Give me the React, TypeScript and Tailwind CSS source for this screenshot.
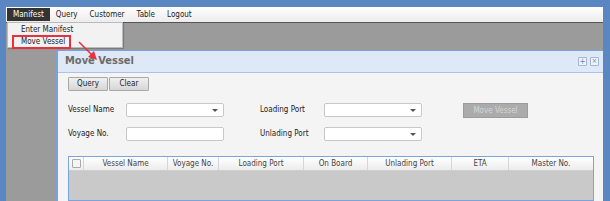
const font = "font-['DejaVu_Sans_Condensed','DejaVu_Sans',sans-serif] [font-stretch:condensed]";

const menuItems = ["Manifest", "Query", "Customer", "Table", "Logout"];

const columns = [
  "Vessel Name",
  "Voyage No.",
  "Loading Port",
  "On Board",
  "Unlading Port",
  "ETA",
  "Master No.",
];

function Select({ width }: { width: string }) {
  return (
    <div
      className={`${width} relative h-[14px] rounded-[2px] border border-[#c8c8c8] bg-white`}
    >
      <span className="absolute right-[5px] top-[5px] h-0 w-0 border-x-[3px] border-t-[3px] border-x-transparent border-t-[#555]" />
    </div>
  );
}

function Button({ label }: { label: string }) {
  return (
    <button className="h-[14px] w-[40px] rounded-[1px] border border-[#a8a8a8] bg-gradient-to-b from-[#f0f0f0] to-[#d6d6d6] text-[8px] leading-[12px] text-[#222]">
      {label}
    </button>
  );
}

export default function App() {
  return (
    <div
      className={`${font} relative h-[201px] w-[610px] overflow-hidden bg-[#5a86c2] pl-[6px] pr-[7px] pt-[7px] text-[8px] text-[#222]`}
    >
      <div className="flex h-full flex-col">
        {/* menu bar */}
        <div className="flex h-[16px] items-center border-b border-[#555] bg-gradient-to-b from-[#ffffff] to-[#ececec] pl-[1px]">
          {menuItems.map((item, i) => (
            <div
              key={item}
              className={
                i === 0
                  ? "flex h-[13px] items-center bg-[#333] px-[6px] text-white"
                  : "flex h-[13px] items-center px-[6px] text-[#222]"
              }
            >
              {item}
            </div>
          ))}
        </div>

        {/* desktop */}
        <div className="flex flex-1 flex-col bg-[#9b9b9b] pl-[50px] pt-[27px]">
          <div className="flex flex-1 flex-col border-l-2 border-t border-[#7aa2da] bg-[#f4f4f4]">
            <div className="flex h-[22px] items-center justify-between border-b border-[#a9c3ea] bg-[#dfe8f6] pl-[7px] pr-[4px]">
              <span className="text-[11px] font-bold text-[#6b6b6b]">Move Vessel</span>
              <div className="flex gap-[3px]">
                <span className="flex h-[9px] w-[9px] items-center justify-center rounded-[1px] border border-[#a3b6d3] bg-[#eef3fa] text-[8px] leading-none text-[#6f87ab]">
                  +
                </span>
                <span className="flex h-[9px] w-[9px] items-center justify-center rounded-[1px] border border-[#a3b6d3] bg-[#eef3fa] text-[7px] leading-none text-[#6f87ab]">
                  ×
                </span>
              </div>
            </div>

            <div className="flex flex-1 flex-col pl-[10px] pr-[9px] pt-[4px]">
              <div className="flex gap-[1px]">
                <Button label="Query" />
                <Button label="Clear" />
              </div>

              <div className="mt-[10px] flex items-center">
                <span className="w-[58px]">Vessel Name</span>
                <Select width="w-[98px]" />
                <span className="ml-[36px] w-[64px]">Loading Port</span>
                <Select width="w-[98px]" />
                <button className="ml-[41px] mt-[2px] h-[15px] w-[65px] border border-[#9c9c9c] bg-[#ababab] text-[8px] text-[#d6d6d6]">
                  Move Vessel
                </button>
              </div>

              <div className="mt-[9px] flex items-center">
                <span className="w-[58px]">Voyage No.</span>
                <div className="h-[14px] w-[98px] rounded-[2px] border border-[#c8c8c8] bg-white" />
                <span className="ml-[36px] w-[64px]">Unlading Port</span>
                <Select width="w-[98px]" />
              </div>

              <div className="mt-[15px] flex flex-1 flex-col border border-[#7aa4dc] bg-[#c9c9c9]">
                <div className="grid h-[14px] grid-cols-[15px_84px_51px_85px_64px_84px_57px_1fr] border-b border-[#cfcfcf] bg-gradient-to-b from-[#ffffff] to-[#ececec] text-[#444]">
                  <div className="flex items-center justify-center border-r border-[#d6d6d6]">
                    <span className="h-[9px] w-[9px] rounded-[1px] border border-[#aaa] bg-[#f4f4f4]" />
                  </div>
                  {columns.map((c, i) => (
                    <div
                      key={c}
                      className={
                        i < columns.length - 1
                          ? "flex items-center justify-center border-r border-[#d6d6d6]"
                          : "flex items-center justify-center"
                      }
                    >
                      {c}
                    </div>
                  ))}
                </div>
              </div>
            </div>
          </div>
        </div>
      </div>

      {/* open dropdown */}
      <div className="absolute left-[7px] top-[22px] flex h-[26px] w-[116px] flex-col border border-[#bbb] bg-[#f2f2f2] pl-[13px] pt-[1px] shadow-[1px_1px_1px_rgba(0,0,0,0.2)]">
        <span className="leading-[12px]">Enter Manifest</span>
        <span className="leading-[12px]">Move Vessel</span>
      </div>
      <div className="absolute left-[12px] top-[35px] h-[14px] w-[59px] border-2 border-[#e8313a]" />

      {/* red arrow */}
      <svg
        className="absolute left-[76px] top-[39px]"
        width="26"
        height="24"
        viewBox="0 0 26 24"
      >
        <line x1="3" y1="3" x2="16" y2="16" stroke="#e8313a" strokeWidth="1.6" />
        <polygon points="21,21 12,18 18,12" fill="#e8313a" />
      </svg>
    </div>
  );
}
